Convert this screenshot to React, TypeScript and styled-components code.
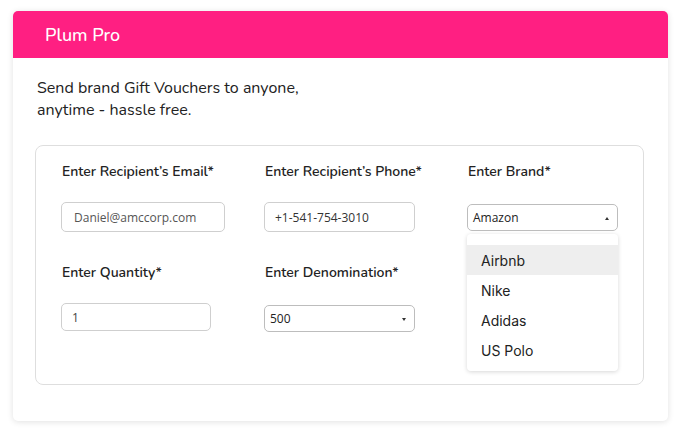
import React from "react";
import styled, { createGlobalStyle } from "styled-components";

const GlobalStyle = createGlobalStyle`
  body {
    margin: 0;
    background: #ffffff;
    font-family: "Nunito", "Lato", "Noto Sans", sans-serif;
  }
`;

const brands = ["Airbnb", "Nike", "Adidas", "US Polo"];

export default function App() {
  return (
    <>
      <GlobalStyle />
      <Page>
        <Card>
          <Header>Plum Pro</Header>
          <Intro>
            Send brand Gift Vouchers to anyone,
            <br />
            anytime - hassle free.
          </Intro>
          <FormBox>
            <Field>
              <Label>Enter Recipient’s Email*</Label>
              <TextInput $width={164} $height={30} $pad={12} $color="#555">
                Daniel@amccorp.com
              </TextInput>
            </Field>
            <Field>
              <Label>Enter Recipient’s Phone*</Label>
              <TextInput $width={151} $height={30} $pad={10} $color="#333">
                +1-541-754-3010
              </TextInput>
            </Field>
            <Field>
              <Label>Enter Brand*</Label>
              <SelectWrap>
                <Select>
                  Amazon
                  <Arrow $up />
                </Select>
                <Menu>
                  {brands.map((b, i) => (
                    <MenuItem key={b} $active={i === 0}>
                      {b}
                    </MenuItem>
                  ))}
                </Menu>
              </SelectWrap>
            </Field>
            <Field>
              <Label>Enter Quantity*</Label>
              <TextInput $width={150} $height={28} $pad={10} $color="#444">
                1
              </TextInput>
            </Field>
            <Field>
              <Label>Enter Denomination*</Label>
              <Select>
                500
                <Arrow />
              </Select>
            </Field>
          </FormBox>
        </Card>
      </Page>
    </>
  );
}

const Page = styled.div`
  padding: 11px 13px;
`;

const Card = styled.div`
  width: 655px;
  height: 410px;
  box-sizing: border-box;
  background: #fff;
  border-radius: 5px;
  box-shadow: 0 1px 6px rgba(0, 0, 0, 0.12);
  overflow: hidden;
`;

const Header = styled.div`
  height: 47px;
  background: #ff1f82;
  color: #fff;
  display: flex;
  align-items: center;
  padding-left: 32px;
  font-size: 18px;
  font-weight: 500;
`;

const Intro = styled.p`
  margin: 0;
  padding: 19px 24px 0;
  font-size: 16px;
  line-height: 22px;
  color: #222;
`;

const FormBox = styled.div`
  margin: 24px 24px 0 22px;
  height: 240px;
  box-sizing: border-box;
  border: 1px solid #dedede;
  border-radius: 8px;
  padding: 17px 0 0 26px;
  display: grid;
  grid-template-columns: repeat(3, 203px);
  grid-template-rows: 101px auto;
  align-items: start;
`;

const Field = styled.div`
  display: flex;
  flex-direction: column;
  align-items: flex-start;
`;

const Label = styled.div`
  font-size: 14px;
  line-height: 18px;
  font-weight: 600;
  color: #222;
  margin-bottom: 21px;
`;

const TextInput = styled.div<{ $width: number; $height: number; $pad: number; $color: string }>`
  width: ${(p) => p.$width}px;
  height: ${(p) => p.$height}px;
  box-sizing: border-box;
  border: 1px solid #cfcfcf;
  border-radius: 5px;
  padding-left: ${(p) => p.$pad}px;
  display: flex;
  align-items: center;
  margin-left: -1px;
  font-family: "Open Sans", "Noto Sans", sans-serif;
  font-size: 12px;
  color: ${(p) => p.$color};
`;

const SelectWrap = styled.div`
  position: relative;
`;

const Select = styled.div`
  position: relative;
  width: 151px;
  height: 27px;
  margin-top: 2px;
  margin-left: -1px;
  box-sizing: border-box;
  border: 1px solid #bdbdbd;
  border-radius: 5px;
  padding-left: 5px;
  display: flex;
  align-items: center;
  font-family: "Open Sans", "Noto Sans", sans-serif;
  font-size: 12px;
  color: #222;
`;

const Arrow = styled.span<{ $up?: boolean }>`
  position: absolute;
  right: 8px;
  top: 50%;
  margin-top: -1px;
  width: 0;
  height: 0;
  border-left: 2px solid transparent;
  border-right: 2px solid transparent;
  ${(p) => (p.$up ? "border-bottom: 3px solid #333;" : "border-top: 3px solid #333;")}
`;

const Menu = styled.div`
  position: absolute;
  top: 32px;
  left: -1px;
  width: 151px;
  box-sizing: border-box;
  padding: 11px 0 6px;
  background: #fff;
  border-radius: 4px;
  box-shadow: 0 1px 4px rgba(0, 0, 0, 0.16);
  z-index: 2;
`;

const MenuItem = styled.div<{ $active?: boolean }>`
  height: 30px;
  display: flex;
  align-items: center;
  padding-left: 14px;
  font-family: "Inter", "Noto Sans", sans-serif;
  font-size: 14px;
  color: #222;
  background: ${(p) => (p.$active ? "#eeeeee" : "transparent")};
`;
